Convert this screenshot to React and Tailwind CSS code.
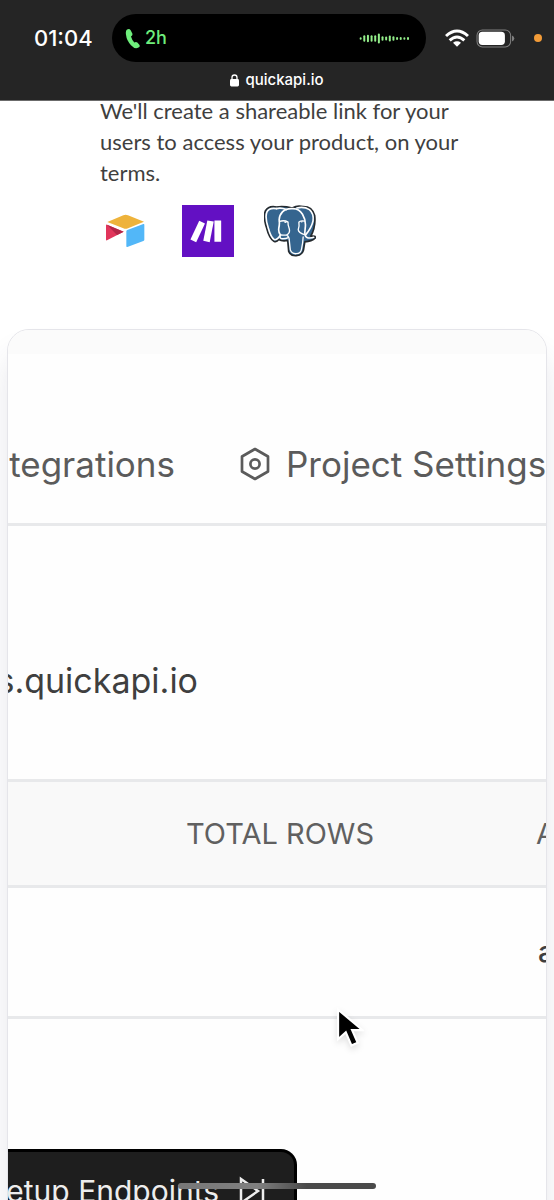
const waveBars = [8, 20, 22, 20, 20, 30, 14, 12, 18, 14, 9, 9, 7, 9]

function StatusBar() {
  return (
    <header className="relative z-10 h-[101px] bg-[#252525] border-b border-[#6b6b6b] text-white font-['Inter',sans-serif]">
      <div className="flex items-center pt-[14px] pl-[34px] pr-3">
        <span className="w-[78px] shrink-0 text-[22px] font-medium leading-6">01:04</span>
        <div className="flex flex-1 h-12 items-center rounded-full bg-black pl-[13px] pr-4 text-[#6fee7c]">
          <svg viewBox="374 86 48 62" className="w-4 h-[21px]" fill="currentColor">
            <path d="M380 90 Q387 86 391 92 L396 102 Q398 107 392 111 Q395 122 402 129 Q407 126 411 129 L417 136 Q421 142 413 145 Q403 149 392 137 Q379 124 377 106 Q375 94 380 90Z" />
          </svg>
          <span className="ml-1 text-lg font-medium">2h</span>
          <WaveForm />
        </div>
        <svg viewBox="504 84 72 54" className="ml-[19px] w-6 h-[18px] shrink-0" fill="none" stroke="#fff" strokeWidth="9">
          <path d="M507 105 Q540 75 573 105" />
          <path d="M518 118 Q540 98 562 118" />
          <path d="M540 137 L528 125 Q540 117 552 125Z" fill="#fff" stroke="none" />
        </svg>
        <svg viewBox="598 84 116 56" className="ml-[7px] w-[39px] h-[19px] shrink-0" fill="none">
          <rect x="601" y="87" width="100" height="50" rx="16" stroke="#808080" strokeWidth="3" />
          <rect x="606" y="92" width="78" height="39" rx="11" fill="#fff" />
          <path d="M705 103 Q712 106 712 112 Q712 118 705 121Z" fill="#808080" />
        </svg>
        <span className="ml-[19px] size-2 shrink-0 rounded-full bg-[#f29b38]" />
      </div>
      <div className="flex items-center justify-center gap-[6px] pt-2 text-[15px] leading-5 font-medium">
        <svg viewBox="0 0 9 13" className="w-[9px] h-[13px]">
          <rect y="5" width="9" height="7.5" rx="1.4" fill="#fff" />
          <path d="M2 6V3.5a2.5 2.5 0 0 1 5 0V6" fill="none" stroke="#fff" strokeWidth="1.3" />
        </svg>
        <span>quickapi.io</span>
      </div>
    </header>
  )
}

function WaveForm() {
  return (
    <svg viewBox="0 0 154 32" className="ml-auto w-[51px] h-[11px]" fill="#93ee8a">
      {waveBars.map((h, i) => (
        <rect key={i} x={2 + i * 11} y={16 - h / 2} width="6" height={h} rx="3" />
      ))}
    </svg>
  )
}

function AirtableLogo() {
  return (
    <svg viewBox="15 30 156 156" className="size-[52px]">
      <path d="M37 81 L85 61 Q92 58 99 61 L147 80 L99 100 Q92 103 85 100Z" fill="#eeb33b" />
      <path d="M33 91 Q33 88 36 89 L86 110 L36 136 Q33 137 33 134Z" fill="#e1355b" />
      <path d="M36 89 L86 110 L66 120Z" fill="#b32648" />
      <path d="M94 109 Q94 106 97 105 L145 87 Q148 86 148 89 L148 134 Q148 137 145 138 L97 156 Q94 157 94 154Z" fill="#52b7f8" />
    </svg>
  )
}

function MakeLogo() {
  return (
    <svg viewBox="0 0 154 154" className="size-[52px] bg-[#6310c3]" fill="#fff">
      <path d="M51 47 L68 55 L42 110 L25 102Z" />
      <path d="M75 46 L94 49 L82 110 L63 106Z" />
      <rect x="96" y="46" width="20" height="63" rx="1" />
    </svg>
  )
}

function PostgresLogo() {
  const head = 'M64 34 Q40 29 30 46 Q23 64 34 98 Q42 130 56 138 Q64 142 71 133 Q80 139 98 136 L101 169 Q106 183 124 182 Q142 180 146 165 L150 140 Q171 139 182 128 Q184 121 168 123 Q184 94 180 60 Q172 32 144 33 Q128 28 112 37 Q84 30 64 34Z'
  return (
    <svg viewBox="26 28 158 158" className="size-[52px]" fill="none" strokeLinejoin="round" strokeLinecap="round">
      <path d={head} fill="#35658f" stroke="#252a2e" strokeWidth="5" />
      <path
        d="M64 39 Q42 35 35 49 Q28 65 39 98 Q47 127 57 133 Q65 136 76 119 Q69 111 71 98 Q74 85 72 73 Q72 60 82 49 Q92 38 112 39 Q132 38 143 56 Q155 76 151 100 L150 112 Q150 125 160 128 Q171 129 177 126"
        stroke="#fff" strokeWidth="5"
      />
      <path d="M64 39 Q78 35 94 42 M126 37 Q148 32 164 42 Q178 54 175 76 Q171 96 153 118" stroke="#fff" strokeWidth="5" />
      <path d="M73 78 Q88 73 99 80 Q98 89 103 101 Q106 113 95 119 Q83 120 76 119 M95 119 Q103 124 103 137 L106 165 Q111 177 124 176 Q138 175 140 162 Q144 144 145 125" stroke="#fff" strokeWidth="4" />
      <path d="M150 77 Q136 74 132 80 Q134 92 130 103 Q131 113 149 118" stroke="#fff" strokeWidth="4" />
      <path d="M76 119 Q72 127 78 130 Q89 132 100 127" stroke="#fff" strokeWidth="4" />
      <path d="M86 79 Q92 77 95 80 Q92 86 86 79Z M136 79 Q141 76 145 79 Q140 84 136 79Z" fill="#fff" />
    </svg>
  )
}

function PreviewCard() {
  return (
    <section className="mx-[7px] mt-[72px] h-[920px] overflow-hidden rounded-t-[22px] border border-[#e5e5ea] bg-[#fefefe] font-['Inter',sans-serif] shadow-[0_25px_30px_rgba(60,60,100,0.12)]">
      <div className="h-6 bg-[#fbfbfb]" />
      <nav className="flex h-[172px] items-center border-b-3 border-[#e8e9eb] pt-[50px] text-[35px] leading-10 text-[#5b5b5b]">
        <a href="#integrations" className="flex w-[167px] shrink-0 justify-end">tegrations</a>
        <a href="#settings" className="ml-[65px] flex shrink-0 items-center gap-4 whitespace-nowrap">
          <svg viewBox="0 0 30 34" className="w-[30px] h-[34px]" fill="none" stroke="#5b5b5b" strokeWidth="2.7" strokeLinejoin="round">
            <path d="M15 2 L28 9.5 V24.5 L15 32 L2 24.5 V9.5Z" />
            <circle cx="15" cy="17" r="4.6" />
          </svg>
          Project Settings
        </a>
      </nav>
      <div className="flex h-[253px] w-[190px] items-center justify-end pt-[56px] text-[34px] leading-10 text-[#3f3f3f]">
        s.quickapi.io
      </div>
      <table className="w-full table-fixed border-collapse text-left">
        <thead>
          <tr className="h-[106px] border-y-3 border-[#e8e9eb] bg-[#f9f9f9] text-[29px] text-[#606060]">
            <th className="w-[178px]" />
            <th className="w-[350px] font-normal">TOTAL ROWS</th>
            <th className="font-normal">A</th>
          </tr>
        </thead>
        <tbody>
          <tr className="h-[131px] border-b-3 border-[#e8e9eb] text-[29px] text-[#3f3f3f]">
            <td />
            <td />
            <td className="pl-[2px] font-medium">a</td>
          </tr>
        </tbody>
      </table>
      <button className="mt-[130px] flex h-[84px] w-[289px] items-center justify-end gap-5 whitespace-nowrap rounded-r-[16px] border-3 border-l-0 border-black bg-[#1e1e1e] pr-[29px] text-[30px] text-[#ededed]">
        etup Endpoints
        <svg viewBox="0 0 26 30" className="w-[26px] h-[30px] shrink-0" fill="none" stroke="#ededed" strokeWidth="2.5">
          <path d="M2 3 L19 15 L2 27Z M24 3 V27" />
        </svg>
      </button>
    </section>
  )
}

export default function App() {
  return (
    <div className="h-screen overflow-hidden bg-white">
      <StatusBar />
      <main>
        <div className="-mt-[6px] px-[100px]">
          <p className="w-[360px] font-['Lato',sans-serif] text-[22px] leading-[31px] text-[#3f3f3f]">
            We'll create a shareable link for your users to access your product, on your terms.
          </p>
          <div className="mt-[17px] flex gap-[30px]">
            <AirtableLogo />
            <MakeLogo />
            <PostgresLogo />
          </div>
        </div>
        <PreviewCard />
      </main>
      {/* mouse pointer from the demo recording */}
      <svg viewBox="0 0 20 30" className="absolute left-[336px] top-[1006px] w-[28px] h-[44px] drop-shadow-md">
        <path d="M1.5 2 V23 L7 18 L11 27.5 L15.5 25.5 L11.5 16.5 H19Z" fill="#000" stroke="#fff" strokeWidth="1.5" />
      </svg>
      <div className="fixed bottom-[11px] left-1/2 h-[6px] w-[198px] -translate-x-1/2 rounded-full bg-linear-to-r from-[#777] via-[#808080] via-40% to-[#4a4a4a] to-65%" />
    </div>
  )
}
